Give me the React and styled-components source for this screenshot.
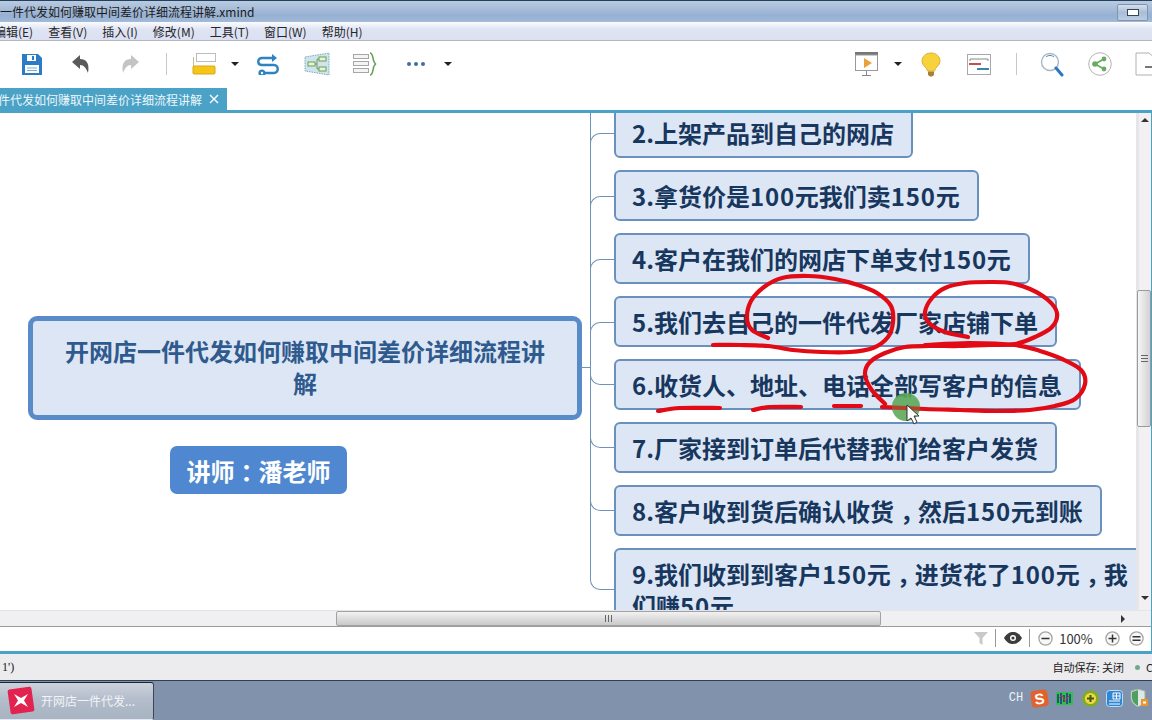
import React from 'react'
import styled, {createGlobalStyle} from 'styled-components'

const TEAL = '#4aa2c6'
const CJK = `"Noto Sans CJK SC", "Noto Sans", sans-serif`

const GlobalStyle = createGlobalStyle`
    html, body { margin: 0; padding: 0; background: #fff; }
    * { box-sizing: border-box; }
`

const Page = styled.div`
    position: relative;
    width: 1152px;
    height: 720px;
    overflow: hidden;
    display: flex;
    flex-direction: column;
    font-family: ${CJK};
    font-size: 12px;
    color: #222;
`

const TitleBar = styled.div`
    height: 22px;
    flex: none;
    display: flex;
    align-items: center;
    justify-content: space-between;
    padding-right: 4px;
    border-top: 1px solid #24405f;
    background: linear-gradient(#b9cbe0, #96b0d2 70%, #a3bad8);
    color: #1a1a1a;
    white-space: nowrap;
`

const WindowButton = styled.div`
    width: 31px;
    height: 17px;
    display: flex;
    align-items: center;
    justify-content: center;
    margin-top: 2px;
    border: 1px solid #8095ad;
    border-radius: 2px;
    background: linear-gradient(#d5e0ee, #a9bdd6 50%, #bccde2);
    &::before {
        content: '';
        width: 10px;
        height: 5px;
        border: 1px solid #33475c;
        background: #fff;
    }
`

const MenuBar = styled.div`
    height: 19px;
    flex: none;
    display: flex;
    align-items: center;
    gap: 15px;
    padding-left: 0;
    border-bottom: 1px solid #b4b6bc;
    background: linear-gradient(#fbfcfe, #dfe4f3 40%, #dbe1f2);
    white-space: nowrap;
    color: #262626;
`

const FirstMenu = styled.span`
    margin-left: -6px;
`

const Toolbar = styled.div`
    height: 47px;
    flex: none;
    display: flex;
    align-items: center;
    padding-left: 6px;
    overflow: hidden;
    background: #fff;
`

const Tool = styled.div`
    flex: none;
    width: ${props=>props.$w}px;
    margin-left: ${props=>props.$gap || 0}px;
    display: flex;
    align-items: center;
    justify-content: center;
    margin-top: -1px;
`

const Separator = styled.div`
    width: 1px;
    height: 22px;
    background: #c9c9c9;
`

const Caret = styled.div`
    width: 0;
    height: 0;
    border-left: 4px solid transparent;
    border-right: 4px solid transparent;
    border-top: 4px solid #222;
`

const TabBar = styled.div`
    height: 22px;
    flex: none;
    background: #fff;
`

const Tab = styled.div`
    width: 227px;
    height: 22px;
    display: flex;
    align-items: center;
    justify-content: space-between;
    padding-right: 8px;
    overflow: hidden;
    background: ${TEAL};
    color: #eef7fb;
    white-space: nowrap;
`

const TabLabel = styled.span`
    margin-left: -2px;
`

const Workspace = styled.div`
    height: 544px;
    flex: none;
    display: flex;
    flex-direction: column;
    border-top: 3px solid ${TEAL};
    border-bottom: 3px solid ${TEAL};
    border-right: 1px solid ${TEAL};
    background: #fff;
`

const CanvasRow = styled.div`
    height: 497px;
    flex: none;
    display: flex;
`

const Canvas = styled.div`
    flex: 1;
    min-width: 0;
    display: flex;
    align-items: flex-start;
    overflow: hidden;
    background: #fff;
`

const LeftPane = styled.div`
    width: 590px;
    flex: none;
    display: flex;
    flex-direction: column;
    padding: 203px 0 0 28px;
`

const CentralTopic = styled.div`
    position: relative;
    width: 554px;
    height: 104px;
    padding: 14px 30px 0;
    border: 5px solid #5a8bc9;
    border-radius: 9px;
    background: #dde6f4;
    color: #2f5a8e;
    font-size: 24px;
    font-weight: 700;
    line-height: 32px;
    text-align: center;
    &::after {
        content: '';
        position: absolute;
        left: 100%;
        top: 46px;
        width: 9px;
        height: 1px;
        margin-left: 4px;
        background: #6f93b8;
    }
`

const Speaker = styled.div`
    width: 177px;
    height: 48px;
    margin: 26px 0 0 142px;
    display: flex;
    align-items: center;
    justify-content: center;
    border-radius: 7px;
    background: #4f88d0;
    color: #fff;
    font-size: 24px;
    font-weight: 700;
`

const Branches = styled.div`
    position: relative;
    flex: none;
    width: 570px;
    display: flex;
    flex-direction: column;
    gap: 12px;
    margin-top: -6px;
    &::before {
        content: '';
        position: absolute;
        left: 0;
        top: 0;
        bottom: 53px;
        width: 1px;
        background: #6f93b8;
    }
`

const Branch = styled.div`
    position: relative;
    padding-left: 24px;
    &::before {
        content: '';
        position: absolute;
        left: 0;
        width: 24px;
        height: 12px;
        border-left: 1px solid #6f93b8;
        ${props=>props.$up
            ? 'bottom: 50%; border-bottom: 1px solid #6f93b8; border-bottom-left-radius: 10px;'
            : 'top: 50%; border-top: 1px solid #6f93b8; border-top-left-radius: 10px;'}
    }
`

const Node = styled.div`
    width: fit-content;
    max-width: 540px;
    padding: 7.5px 17px 7.5px 16px;
    border: 2px solid #6a90bd;
    border-radius: 6px;
    background: #dde6f4;
    color: #17375e;
    font-size: 24px;
    font-weight: 700;
    line-height: 32px;
`

// full width punctuation sits in the middle of its cell in the reference
const Punct = styled.span`
    display: inline-block;
    width: 1em;
    text-align: center;
    font-feature-settings: "halt";
`

const Amount = styled.span`
    letter-spacing: 0.8px;
`

const VScroll = styled.div`
    width: 15px;
    flex: none;
    display: flex;
    flex-direction: column;
    align-items: center;
    border-left: 3px solid #e6e6e8;
    background: #f3f0f4;
`

const VTrack = styled.div`
    flex: 1;
    width: 15px;
    margin-left: -3px;
    padding-top: 177px;
    position: relative;
`

const VThumb = styled.div`
    width: 14px;
    height: 137px;
    margin-left: 1px;
    margin-top: -20px;
    display: flex;
    align-items: center;
    justify-content: center;
    border: 1px solid #9a9a9a;
    border-radius: 2px;
    background: linear-gradient(90deg, #f6f6f6, #d2d2d2);
`

const ArrowUp = styled.div`
    margin-top: 5px;
    height: 15px;
    &::before {
        content: '';
        display: block;
        border-left: 4px solid transparent;
        border-right: 4px solid transparent;
        border-bottom: 4px solid #333;
    }
`

const ArrowDown = styled.div`
    height: 14px;
    &::before {
        content: '';
        display: block;
        border-left: 4px solid transparent;
        border-right: 4px solid transparent;
        border-top: 4px solid #333;
    }
`

const HScroll = styled.div`
    height: 17px;
    flex: none;
    display: flex;
    align-items: center;
    padding-left: 336px;
    border-top: 1px solid #e6e4e8;
    border-bottom: 1px solid #9c9c9c;
    background: #f0eff1;
`

const HThumb = styled.div`
    width: 545px;
    height: 15px;
    display: flex;
    align-items: center;
    justify-content: center;
    border: 1px solid #a2a2a2;
    border-radius: 2px;
    background: linear-gradient(#f2f2f2, #c9c9c9);
`

const Grip = styled.div`
    width: 7px;
    height: 7px;
    background: ${props=>props.$vertical
        ? 'repeating-linear-gradient(#666 0 1px, transparent 1px 3px)'
        : 'repeating-linear-gradient(90deg, #666 0 1px, transparent 1px 3px)'};
`

const ArrowRight = styled.div`
    margin-left: 240px;
    width: 0;
    height: 0;
    border-top: 4px solid transparent;
    border-bottom: 4px solid transparent;
    border-left: 4px solid #333;
`

const ZoomBar = styled.div`
    flex: 1;
    display: flex;
    align-items: center;
    padding: 0 0 2px 971px;
    background: #fff;
    color: #333;
    font-size: 13px;
`

const ZoomSep = styled.div`
    width: 1px;
    height: 18px;
    margin-left: ${props=>props.$gap}px;
    background: #999;
`

const ZoomItem = styled.div`
    flex: none;
    width: ${props=>props.$w}px;
    margin-left: ${props=>props.$gap || 0}px;
    display: flex;
    align-items: center;
    justify-content: center;
    white-space: nowrap;
`

const StatusBar = styled.div`
    height: 26px;
    flex: none;
    display: flex;
    align-items: center;
    justify-content: space-between;
    padding-left: 2px;
    overflow: hidden;
    background: #ecebee;
    font-family: "Liberation Serif", ${CJK};
    white-space: nowrap;
`

const StatusRight = styled.div`
    display: flex;
    align-items: center;
    margin-right: -1px;
    font-family: ${CJK};
    font-size: 11px;
`

const Dot = styled.span`
    width: 5px;
    height: 5px;
    margin: 0 6px 0 11px;
    border-radius: 50%;
    background: #6fa98e;
`

const Taskbar = styled.div`
    height: 40px;
    flex: none;
    display: flex;
    align-items: center;
    justify-content: space-between;
    border-top: 1px solid #2f3e52;
    background: #8193ac;
`

const TaskButton = styled.div`
    width: 154px;
    height: 38px;
    display: flex;
    align-items: center;
    gap: 6px;
    padding-left: 7px;
    border: 1px solid #e4e8ee;
    border-left: 0;
    border-top-color: #1c2530;
    border-right-color: #3c4656;
    border-radius: 0 3px 3px 0;
    background: linear-gradient(#ccd2dc, #b3bdcb 45%, #a8b3c3);
    color: #f1f4f8;
    white-space: nowrap;
`

const Tray = styled.div`
    display: flex;
    align-items: center;
    margin-top: -5px;
`

const TrayItem = styled.div`
    flex: none;
    width: ${props=>props.$w}px;
    display: flex;
    align-items: center;
    justify-content: center;
`

const LangLabel = styled.span`
    font-family: "Liberation Mono", monospace;
    font-size: 12px;
    color: #eef2f6;
`

const SogouBadge = styled.span`
    width: 17px;
    height: 17px;
    display: flex;
    align-items: center;
    justify-content: center;
    border-radius: 4px;
    transform: rotate(-8deg);
    background: #e2612c;
    color: #fff;
    font-family: "Liberation Sans", sans-serif;
    font-size: 15px;
    font-weight: 700;
`

const Overlay = styled.svg`
    position: absolute;
    left: 0;
    top: 0;
    pointer-events: none;
`

const nodes = [
    {text: '2.上架产品到自己的网店'},
    {text: '3.拿货价是100元我们卖150元'},
    {text: '4.客户在我们的网店下单支付150元'},
    {text: '5.我们去自己的一件代发厂家店铺下单'},
    {text: '6.收货人、地址、电话全部写客户的信息', up: true},
    {text: '7.厂家接到订单后代替我们给客户发货', up: true},
    {text: '8.客户收到货后确认收货，然后150元到账', up: true},
    {text: '9.我们收到到客户150元，进货花了100元，我们赚50元', up: true},
]

const menus = ['查看(V)', '插入(I)', '修改(M)', '工具(T)', '窗口(W)', '帮助(H)']

// pen strokes the presenter drew over the map, as point lists
const strokes = [
    [[768,338],[752,330],[747,318],[751,301],[764,287],[782,278],[808,276],[835,279],[858,285],[877,293],[891,306],[893,322],[888,337],[873,348],[850,352],[822,352],[793,350],[768,346],[740,345],[713,345]],
    [[968,337],[945,332],[929,323],[925,312],[932,298],[945,288],[965,283],[990,282],[1010,283],[1030,289],[1048,300],[1057,313],[1052,327],[1035,337],[1015,344],[990,345],[960,346],[930,346],[905,347],[885,353],[870,362],[865,374],[871,389],[885,404]],
    [[925,345],[970,343],[1015,345],[1040,351],[1062,359],[1081,370],[1085,384],[1075,399],[1055,406],[1030,410],[995,411],[960,410],[925,409],[882,407]],
    [[658,411],[680,408],[720,408]],
    [[753,410],[770,407],[801,407]],
    [[834,406],[861,406]],
]

const toPath = points => {
    let d = `M${points[0][0]} ${points[0][1]}`
    for (let i = 0; i < points.length - 1; i++) {
        const p0 = points[i - 1] || points[i]
        const p1 = points[i]
        const p2 = points[i + 1]
        const p3 = points[i + 2] || p2
        d += ` C${p1[0] + (p2[0] - p0[0]) / 6} ${p1[1] + (p2[1] - p0[1]) / 6} ${p2[0] - (p3[0] - p1[0]) / 6} ${p2[1] - (p3[1] - p1[1]) / 6} ${p2[0]} ${p2[1]}`
    }
    return d
}

const formatNode = text => text.split(/(，|\d{2,})/).map((part, i) => {
    if (part === '，') return <Punct key={i}>{part}</Punct>
    if (/^\d{2,}$/.test(part)) return <Amount key={i}>{part}</Amount>
    return part
})

const SaveIcon = () => (
    <svg width="21" height="21" viewBox="0 0 21 21">
        <path d="M1 0H17L21 4V21H1Z" fill="#2b7cc4" />
        <rect x="6" y="1" width="9" height="6" fill="#fff" />
        <rect x="11" y="2" width="2" height="4" fill="#2b7cc4" />
        <rect x="4" y="11" width="14" height="8" fill="#fff" />
        <path d="M6 14H16M6 16.5H16" stroke="#7aa9d4" />
    </svg>
)

const ArrowIcon = ({color, flip}) => (
    <svg width="20" height="20" viewBox="0 0 20 20" style={flip ? {transform: 'scaleX(-1)'} : undefined}>
        <path d="M1 8L9 1V5C15 5 19 9 17 19C15 14 13 11 9 11V15Z" fill={color} />
    </svg>
)

const TopicIcon = () => (
    <svg width="24" height="22" viewBox="0 0 24 22">
        <rect x="4.5" y="0.5" width="19" height="8" fill="#fff" stroke="#bdbdbd" />
        <path d="M1.5 4V16H4" fill="none" stroke="#c9b9a0" />
        <rect x="1" y="13" width="22" height="8" rx="1" fill="#f5c518" stroke="#d8a915" />
    </svg>
)

const RelationIcon = () => (
    <svg width="24" height="22" viewBox="0 0 24 22" fill="none" stroke="#2d83c4" strokeWidth="2.4">
        <path d="M19 5H6C1 5 1 12 6 12H18C23 12 23 20 18 20H8" />
        <path d="M16 1L21 5L16 9Z" fill="#2d83c4" stroke="none" />
        <circle cx="6" cy="20" r="2.4" />
    </svg>
)

const BoundaryIcon = () => (
    <svg width="26" height="24" viewBox="0 0 26 24" fill="none">
        <path d="M1 5L25 1V23L1 19Z" fill="#cfe4ec" stroke="#7fa7b8" strokeDasharray="1.5 1" />
        <rect x="4" y="10" width="7" height="4" fill="#e6f3d4" stroke="#6b9e58" />
        <rect x="15" y="5" width="7" height="4" fill="#e6f3d4" stroke="#6b9e58" />
        <rect x="15" y="15" width="7" height="4" fill="#e6f3d4" stroke="#6b9e58" />
        <path d="M11 12H13M13 7V17M13 7H15M13 17H15" stroke="#6b9e58" />
    </svg>
)

const SummaryIcon = () => (
    <svg width="25" height="24" viewBox="0 0 25 24" fill="none">
        <rect x="0.5" y="2.5" width="15" height="4" fill="#f4f4f4" stroke="#a6a6a6" />
        <rect x="0.5" y="9.5" width="15" height="4" fill="#f4f4f4" stroke="#a6a6a6" />
        <rect x="0.5" y="16.5" width="15" height="4" fill="#f4f4f4" stroke="#a6a6a6" />
        <path d="M17 1C21 1 19 11 23 12C19 13 21 23 17 23" stroke="#6b9e58" strokeWidth="1.6" />
    </svg>
)

const DotsIcon = () => (
    <svg width="20" height="6" viewBox="0 0 20 6" fill="#3f6ea5">
        <circle cx="3" cy="3" r="2" />
        <circle cx="10" cy="3" r="2" />
        <circle cx="17" cy="3" r="2" />
    </svg>
)

const PresentIcon = () => (
    <svg width="24" height="24" viewBox="0 0 24 24" fill="none">
        <rect x="1" y="0" width="23" height="3" fill="#777" />
        <rect x="1.5" y="3" width="22" height="15.5" fill="#fff" stroke="#999" />
        <path d="M10 6L18 11L10 16Z" fill="#e9a23b" />
        <path d="M12.5 19V23M8 23.5H17" stroke="#888" />
    </svg>
)

const BulbIcon = () => (
    <svg width="20" height="25" viewBox="0 0 20 25">
        <path d="M10 1C4 1 1 5 1 9C1 14 6 15 6.5 19H13.5C14 15 19 14 19 9C19 5 16 1 10 1Z" fill="#f7d23c" stroke="#dcb232" />
        <path d="M7 19.5H13V23L11 24.5H9L7 23Z" fill="#a57f3c" />
    </svg>
)

const GanttIcon = () => (
    <svg width="24" height="21" viewBox="0 0 24 21" fill="none">
        <rect x="0.5" y="0.5" width="23" height="20" fill="#fff" stroke="#a8a8a8" />
        <path d="M3 5H21M3 5V7M21 5V7" stroke="#888" />
        <rect x="2" y="9" width="12" height="2" fill="#cc4a55" />
        <rect x="10" y="14" width="12" height="2" fill="#3d84aa" />
    </svg>
)

const SearchIcon = () => (
    <svg width="24" height="25" viewBox="0 0 24 25" fill="none">
        <circle cx="10" cy="10" r="8.5" stroke="#a9b7c4" strokeWidth="1.4" fill="#fff" />
        <path d="M6 5C8 3 12 3 14 5" stroke="#4d87b5" />
        <path d="M16 16L22 23" stroke="#2a78bd" strokeWidth="3" strokeLinecap="round" />
    </svg>
)

const ShareIcon = () => (
    <svg width="24" height="24" viewBox="0 0 24 24" fill="none">
        <circle cx="12" cy="12" r="11.3" fill="#fff" stroke="#b5b5b5" />
        <path d="M7 12L16 7M7 12L16 17" stroke="#6aaa62" strokeWidth="1.8" />
        <circle cx="7" cy="12" r="2.8" fill="#6aaa62" />
        <circle cx="16" cy="7" r="2.4" fill="#6aaa62" />
        <circle cx="16" cy="17" r="2.4" fill="#6aaa62" />
    </svg>
)

const ExportIcon = () => (
    <svg width="24" height="24" viewBox="0 0 24 24" fill="none">
        <path d="M1 1H14L21 7V23H1Z" fill="#fff" stroke="#b0b0b0" />
        <path d="M10 15H18" stroke="#555" strokeWidth="1.6" />
    </svg>
)

const FunnelIcon = () => (
    <svg width="14" height="14" viewBox="0 0 14 14">
        <path d="M0 1H14L8.5 7V14L5.5 12V7Z" fill="#c9c9c9" />
    </svg>
)

const EyeIcon = () => (
    <svg width="18" height="12" viewBox="0 0 18 12">
        <path d="M0 6C3 1 6 0 9 0S15 1 18 6C15 11 12 12 9 12S3 11 0 6Z" fill="#3c3c3c" />
        <circle cx="9" cy="6" r="3" fill="#fff" />
        <circle cx="9" cy="6" r="1.6" fill="#3c3c3c" />
    </svg>
)

const ZoomGlyph = ({kind}) => (
    <svg width="15" height="15" viewBox="0 0 15 15" fill="none">
        <circle cx="7.5" cy="7.5" r="6.6" stroke="#a5a5a5" strokeWidth="1.3" fill="#f7f7f7" />
        {kind === 'menu'
            ? <path d="M3.5 5.8H11.5M3.5 9.2H11.5" stroke="#333" strokeWidth="1.5" />
            : <path d="M3.5 7.5H11.5" stroke="#333" strokeWidth="1.5" />}
        {kind === 'plus' && <path d="M7.5 3.5V11.5" stroke="#333" strokeWidth="1.5" />}
    </svg>
)

const XmindIcon = () => (
    <svg width="28" height="29" viewBox="0 0 28 29">
        <rect x="2" y="2" width="24" height="25" rx="2" fill="#e2224f" transform="rotate(-8 14 14.5)" />
        <path d="M7 8L14 12L21 8L17 14.5L21 21L14 17L7 21L11 14.5Z" fill="#fff" />
    </svg>
)

const NetIcon = () => (
    <svg width="17" height="15" viewBox="0 0 17 15">
        <rect x="0" y="1" width="17" height="13" fill="#2fbe4f" />
        <path d="M2 3V12M5 2V13M8 4V11M11 2V13M14 3V12" stroke="#222a8c" strokeWidth="1.4" />
        <path d="M3 7L6 4L9 10L13 5" stroke="#d3305a" fill="none" />
    </svg>
)

const PlusBadge = () => (
    <svg width="17" height="17" viewBox="0 0 17 17">
        <circle cx="8.5" cy="8.5" r="8.2" fill="#7fae1c" />
        <circle cx="8.5" cy="8.5" r="5.6" fill="#f2d64a" />
        <path d="M8.5 5V12M5 8.5H12" stroke="#3d5a10" strokeWidth="2" />
    </svg>
)

const BlueTrayIcon = () => (
    <svg width="17" height="17" viewBox="0 0 17 17" fill="none">
        <rect x="0.5" y="0.5" width="16" height="16" rx="3" fill="#2f86d2" stroke="#bcdcf5" />
        <path d="M7 3H14V9H7ZM7 6H14M10.5 3V9M3 11H14M3 14H14" stroke="#fff" />
    </svg>
)

const ShieldIcon = () => (
    <svg width="18" height="18" viewBox="0 0 18 18">
        <path d="M8 0L15 2V9C15 13 12 16 8 18C4 16 1 13 1 9V2Z" fill="#dfe8e2" stroke="#9bb0a4" />
        <path d="M8 1V17C4 15 2 12 2 9V3Z" fill="#4f9f63" />
        <rect x="11" y="10" width="7" height="7" fill="#e8962e" />
        <rect x="13" y="12.5" width="3" height="2" fill="#fff" />
    </svg>
)

const App = () => {
    return(
        <>
        <GlobalStyle />
        <Page>
            <TitleBar>
                <span>一件代发如何赚取中间差价详细流程讲解.xmind</span>
                <WindowButton />
            </TitleBar>
            <MenuBar>
                <FirstMenu>编辑(E)</FirstMenu>
                {menus.map(menu => <span key={menu}>{menu}</span>)}
            </MenuBar>
            <Toolbar>
                <Tool $w={50}><SaveIcon /></Tool>
                <Tool $w={50}><ArrowIcon color="#5a5a5a" /></Tool>
                <Tool $w={48}><ArrowIcon color="#c4c4c4" flip /></Tool>
                <Tool $w={24}><Separator /></Tool>
                <Tool $w={52}><TopicIcon /></Tool>
                <Tool $w={10}><Caret /></Tool>
                <Tool $w={56}><RelationIcon /></Tool>
                <Tool $w={42}><BoundaryIcon /></Tool>
                <Tool $w={54}><SummaryIcon /></Tool>
                <Tool $w={48}><DotsIcon /></Tool>
                <Tool $w={16}><Caret /></Tool>
                <Tool $w={40} $gap={390}><PresentIcon /></Tool>
                <Tool $w={24}><Caret /></Tool>
                <Tool $w={42}><BulbIcon /></Tool>
                <Tool $w={54}><GanttIcon /></Tool>
                <Tool $w={20}><Separator /></Tool>
                <Tool $w={52}><SearchIcon /></Tool>
                <Tool $w={44}><ShareIcon /></Tool>
                <Tool $w={50}><ExportIcon /></Tool>
            </Toolbar>
            <TabBar>
                <Tab>
                    <TabLabel>件代发如何赚取中间差价详细流程讲解</TabLabel>
                    <svg width="10" height="10" viewBox="0 0 10 10">
                        <path d="M1 1L9 9M9 1L1 9" stroke="#fff" strokeWidth="1.4" />
                    </svg>
                </Tab>
            </TabBar>
            <Workspace>
                <CanvasRow>
                    <Canvas>
                        <LeftPane>
                            <CentralTopic>开网店一件代发如何赚取中间差价详细流程讲解</CentralTopic>
                            <Speaker>讲师<Punct>：</Punct>潘老师</Speaker>
                        </LeftPane>
                        <Branches>
                            {nodes.map(node => (
                                <Branch key={node.text} $up={node.up}>
                                    <Node>{formatNode(node.text)}</Node>
                                </Branch>
                            ))}
                        </Branches>
                    </Canvas>
                    <VScroll>
                        <ArrowUp />
                        <VTrack>
                            <VThumb><Grip $vertical /></VThumb>
                        </VTrack>
                        <ArrowDown />
                    </VScroll>
                </CanvasRow>
                <HScroll>
                    <HThumb><Grip /></HThumb>
                    <ArrowRight />
                </HScroll>
                <ZoomBar>
                    <ZoomItem $w={20}><FunnelIcon /></ZoomItem>
                    <ZoomSep $gap={4} />
                    <ZoomItem $w={26} $gap={4}><EyeIcon /></ZoomItem>
                    <ZoomSep $gap={3} />
                    <ZoomItem $w={18} $gap={6}><ZoomGlyph kind="minus" /></ZoomItem>
                    <ZoomItem $w={36} $gap={4}>100%</ZoomItem>
                    <ZoomItem $w={18} $gap={9}><ZoomGlyph kind="plus" /></ZoomItem>
                    <ZoomItem $w={18} $gap={6}><ZoomGlyph kind="menu" /></ZoomItem>
                </ZoomBar>
            </Workspace>
            <StatusBar>
                <span>1')</span>
                <StatusRight>
                    <span>自动保存: 关闭</span>
                    <Dot />
                    <span>C</span>
                </StatusRight>
            </StatusBar>
            <Taskbar>
                <TaskButton>
                    <XmindIcon />
                    <span>开网店一件代发...</span>
                </TaskButton>
                <Tray>
                    <TrayItem $w={24}><LangLabel>CH</LangLabel></TrayItem>
                    <TrayItem $w={22}><SogouBadge>S</SogouBadge></TrayItem>
                    <TrayItem $w={28}><NetIcon /></TrayItem>
                    <TrayItem $w={24}><PlusBadge /></TrayItem>
                    <TrayItem $w={24}><BlueTrayIcon /></TrayItem>
                    <TrayItem $w={26}><ShieldIcon /></TrayItem>
                </Tray>
            </Taskbar>
            <Overlay width="1152" height="720" viewBox="0 0 1152 720">
                <circle cx="906" cy="407" r="14" fill="#5ea85a" opacity="0.85" />
                <g fill="none" stroke="#e20a14" strokeWidth="4.2" strokeLinecap="round" strokeLinejoin="round">
                    {strokes.map((points, i) => <path key={i} d={toPath(points)} />)}
                </g>
                <circle cx="906" cy="407" r="14" fill="#5ea85a" opacity="0.35" />
                <path d="M907 405V421L911 418L914 424L917 422L914 416H919Z" fill="#fff" stroke="#333" strokeWidth="1" />
            </Overlay>
        </Page>
        </>
    );
}

export default App
